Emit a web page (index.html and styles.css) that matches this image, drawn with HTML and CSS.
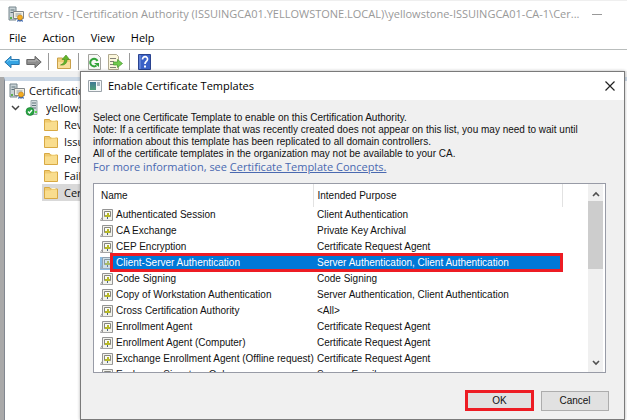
FILE: index.html
```html
<!DOCTYPE html>
<html lang="en">
<head>
<meta charset="utf-8">
<title>certsrv</title>
<link rel="stylesheet" href="styles.css">
</head>
<body>
<svg class="defs" aria-hidden="true">
  <symbol id="ca" viewBox="0 0 16 16">
    <path d="M1 1h7v13H1z" fill="#c9d3d6" stroke="#76868d"/>
    <path d="M2.500 4h4M2.500 6.500h4" stroke="#5d7079"/>
    <path d="M2 11h2v2H2z" fill="#5ab04c"/>
    <path d="M5.500 5.500h10v7h-10z" fill="#f4f1e4" stroke="#81868a"/>
    <path d="M7.500 8h6M7.500 10h3" stroke="#8f9aa0"/>
    <path d="m10 12-1 4 2-1 1 1v-4zM12 12v4l1-1 2 1-1-4z" fill="#3d68b0"/>
    <circle cx="12" cy="11.500" r="2.500" fill="#f3ad22" stroke="#c47d10" stroke-width=".6"/>
  </symbol>
  <symbol id="folder" viewBox="0 0 14 13">
    <path d="M.5 1.500h5l1 1.500h7v9.500H.5z" fill="#f0cb70" stroke="#d8a943"/>
    <path d="M1 4.500h5.500l1-1H13V12H1z" fill="#f9dd8e"/>
    <path d="M7.500 2.500h4" stroke="#fff5ce"/>
  </symbol>
  <symbol id="cert" viewBox="0 0 13 13">
    <path d="M2.500.5h10v11h-10z" fill="#f2f2ec" stroke="#949494"/>
    <path d="M2 8.500.5 11.500h11" fill="none" stroke="#a5a5a5"/>
    <path d="M4.500 2.500h6v5h-6z" fill="#fbfbf3" stroke="#85857f"/>
    <path d="M7 4h2v4H7zM5 6h5v2H5z" fill="#b7b928"/>
    <path d="M7.500 8v2" stroke="#4a627e"/>
  </symbol>
</svg>

<main class="window">
  <header class="titlebar">
    <svg class="i16"><use href="#ca"/></svg>
    <h1>certsrv - [Certification Authority (ISSUINGCA01.YELLOWSTONE.LOCAL)\yellowstone-ISSUINGCA01-CA-1\Cer...</h1>
    <button class="minimize" type="button" aria-label="Minimize"></button>
  </header>
  <nav class="menubar">
    <button type="button">File</button>
    <button type="button">Action</button>
    <button type="button">View</button>
    <button type="button">Help</button>
  </nav>
  <div class="toolbar">
    <button type="button" aria-label="Back"><svg class="i16" viewBox="0 0 16 16"><path d="M.8 8 7 2.300v3.200h8.200v5H7v3.200z" fill="#35a4e3" stroke="#2876ae"/><path d="M3 7.500 6 5v1.500h8" fill="none" stroke="#83d0f5"/></svg></button>
    <button class="forward" type="button" aria-label="Forward"><svg class="i16" viewBox="0 0 16 16"><path d="M15.200 8 9 2.300v3.200H.8v5H9v3.200z" fill="#8d8d8d" stroke="#686868"/><path d="M2 7h8V5l2.500 2.500" fill="none" stroke="#b5b5b5"/></svg></button>
    <span class="sep"></span>
    <button class="up" type="button" aria-label="Up one level"><svg class="i16" viewBox="0 0 16 16"><path d="M1.500 4h5l1 1.500h7v9h-13z" fill="#f2cf78" stroke="#c9a04a"/><path d="M2 8h12v6H2z" fill="#f9df9b"/><path d="M4.500 11c3-1 4-3 4-5.500H6L10 1l3.500 4.500H11c0 4-2.500 6-6.500 5.500z" fill="#65b52b" stroke="#43891c" stroke-width=".6"/></svg></button>
    <span class="sep"></span>
    <button class="refresh" type="button" aria-label="Refresh"><svg class="i16" viewBox="0 0 16 16"><path d="M2.500.5h9l3 3v12h-12z" fill="#f7f8f5" stroke="#a3a39e"/><path d="M11.500 7A3.800 3.800 0 1 0 10.500 11.500" fill="none" stroke="#31a338" stroke-width="2"/><path d="M8 9h5v4z" fill="#31a338"/></svg></button>
    <button class="export" type="button" aria-label="Export list"><svg class="i16" viewBox="0 0 16 16"><path d="M1.500.5h8l2 2v13h-10z" fill="#fcf7dc" stroke="#b0a98f"/><path d="M3 4.500h6M3 7.500h4M3 10.500h4M3 13.500h6" stroke="#817f78"/><path d="M6.500 8h4V5.500l5 4-5 4V11h-4z" fill="#72cb4e" stroke="#44952e" stroke-width=".7"/></svg></button>
    <span class="sep"></span>
    <button class="help" type="button" aria-label="Help"><svg class="i16" viewBox="0 0 16 16"><path d="M2.500.5h12v15h-12z" fill="#3b61c7" stroke="#2a438f"/><path d="M4 1v14" stroke="#829de1"/><path d="M6.500 5.500c0-4 5.500-3.500 5 0C11.200 7.500 9 7.500 9 10" fill="none" stroke="#fff" stroke-width="1.700"/><path d="M8 11.500h2v2H8z" fill="#fff"/></svg></button>
  </div>

  <section class="workspace">
    <ul class="tree">
      <li class="root"><svg class="i16"><use href="#ca"/></svg><span>Certification Authority</span></li>
      <li class="server">
        <svg class="chevron" viewBox="0 0 9 6"><path d="m1 1 3.500 3.500L8 1" fill="none" stroke="#444" stroke-width="1.500"/></svg>
        <svg class="i16" viewBox="0 0 16 16"><path d="M6 .5h6v14H6z" fill="#d4dddf" stroke="#97a6ab"/><path d="M7 3h4M7 5.500h4M7 8h4" stroke="#60747c"/><path d="M10 11h2v2h-2z" fill="#5ccf4f"/><circle cx="5" cy="11.500" r="4" fill="#29a343" stroke="#147a2b" stroke-width=".6"/><path d="m3 11.500 1.500 1.500L7 10" fill="none" stroke="#fff" stroke-width="1.300"/></svg>
        <span>yellowstone</span>
      </li>
      <li class="leaf"><svg class="folder"><use href="#folder"/></svg><span>Revoked</span></li>
      <li class="leaf"><svg class="folder"><use href="#folder"/></svg><span>Issued</span></li>
      <li class="leaf"><svg class="folder"><use href="#folder"/></svg><span>Pending</span></li>
      <li class="leaf"><svg class="folder"><use href="#folder"/></svg><span>Failed</span></li>
      <li class="leaf current"><svg class="folder"><use href="#folder"/></svg><span>Certificate</span></li>
    </ul>
  </section>

  <section class="dialog" role="dialog" aria-labelledby="dialog-title">
    <header class="dialog-title">
      <svg class="app" viewBox="0 0 14 12"><defs><linearGradient id="g" x2="0" y2="1"><stop stop-color="#3f7894"/><stop offset="1" stop-color="#4fa077"/></linearGradient></defs><path d="M.5.5h13v11H.5z" fill="#f5f7f8" stroke="#9ba3a9"/><path d="M2 2h6v8H2z" fill="url(#g)"/><path d="M9 2h3v4H9z" fill="#a5b4bd"/></svg>
      <h2 id="dialog-title">Enable Certificate Templates</h2>
      <button class="close" type="button" aria-label="Close"><svg viewBox="0 0 10 10"><path d="m.5.5 9 9m0-9-9 9" stroke="#222" stroke-width="1.200"/></svg></button>
    </header>
    <div class="dialog-body">
      <p>Select one Certificate Template to enable on this Certification Authority.<br>Note: If a certificate template that was recently created does not appear on this list, you may need to wait until<br>information about this template has been replicated to all domain controllers.<br>All of the certificate templates in the organization may not be available to your CA.</p>
      <p class="more">For more information, see <a href="#concepts">Certificate Template Concepts.</a></p>
      <div class="listbox">
        <div class="list-view">
          <table>
            <colgroup><col class="c-icon"><col class="c-name"><col></colgroup>
            <thead><tr><th colspan="2">Name</th><th>Intended Purpose</th></tr></thead>
            <tbody>
              <tr><td><svg class="cert"><use href="#cert"/></svg></td><td>Authenticated Session</td><td>Client Authentication</td></tr>
              <tr><td><svg class="cert"><use href="#cert"/></svg></td><td>CA Exchange</td><td>Private Key Archival</td></tr>
              <tr><td><svg class="cert"><use href="#cert"/></svg></td><td>CEP Encryption</td><td>Certificate Request Agent</td></tr>
              <tr class="selected"><td><svg class="cert"><use href="#cert"/></svg></td><td>Client-Server Authentication</td><td>Server Authentication, Client Authentication</td></tr>
              <tr><td><svg class="cert"><use href="#cert"/></svg></td><td>Code Signing</td><td>Code Signing</td></tr>
              <tr><td><svg class="cert"><use href="#cert"/></svg></td><td>Copy of Workstation Authentication</td><td>Server Authentication, Client Authentication</td></tr>
              <tr><td><svg class="cert"><use href="#cert"/></svg></td><td>Cross Certification Authority</td><td>&lt;All&gt;</td></tr>
              <tr><td><svg class="cert"><use href="#cert"/></svg></td><td>Enrollment Agent</td><td>Certificate Request Agent</td></tr>
              <tr><td><svg class="cert"><use href="#cert"/></svg></td><td>Enrollment Agent (Computer)</td><td>Certificate Request Agent</td></tr>
              <tr><td><svg class="cert"><use href="#cert"/></svg></td><td>Exchange Enrollment Agent (Offline request)</td><td>Certificate Request Agent</td></tr>
              <tr><td><svg class="cert"><use href="#cert"/></svg></td><td>Exchange Signature Only</td><td>Secure Email</td></tr>
            </tbody>
          </table>
        </div>
        <div class="scrollbar">
          <svg viewBox="0 0 8 6"><path d="m1 5 3-3 3 3" fill="none" stroke="#505050" stroke-width="1.600"/></svg>
          <span class="thumb"></span>
          <svg viewBox="0 0 8 6"><path d="m1 1 3 3 3-3" fill="none" stroke="#505050" stroke-width="1.600"/></svg>
        </div>
      </div>
      <footer class="actions">
        <button class="ok" type="button">OK</button>
        <button type="button">Cancel</button>
      </footer>
    </div>
  </section>
</main>
</body>
</html>
```
FILE: styles.css
```css
* { box-sizing: border-box; }

body {
  margin: 0;
  overflow: hidden;
  color: #111;
  background: #fff;
  font: 11px/16px "Open Sans", "Noto Sans", sans-serif;
}

button {
  padding: 0;
  border: 0;
  background: none;
  color: inherit;
  font: inherit;
}

h1, h2, p, ul { margin: 0; padding: 0; }
h1, h2 { font-size: 11px; font-weight: 400; white-space: nowrap; }
svg { display: block; flex: none; }

.defs { position: absolute; width: 0; height: 0; }
.i16 { width: 16px; height: 16px; }

.window {
  position: relative;
  display: flex;
  flex-direction: column;
  min-height: 100vh;
  border-top: 1px solid #efefef;
}

.titlebar {
  display: flex;
  align-items: center;
  height: 26px;
  padding: 0 25px 0 8px;
  gap: 4px;
  color: #999;
}

.titlebar h1 { flex: 1; }
.minimize { width: 10px; height: 1px; background: #999; }

.menubar {
  display: flex;
  align-items: center;
  gap: 16px;
  height: 23px;
  padding: 0 9px;
  border-bottom: 1px solid #b9bdbc;
  color: #000;
}

.toolbar {
  display: flex;
  align-items: center;
  height: 21px;
  padding: 2px 0 0 4px;
}

.toolbar .forward { margin-left: 6px; }
.toolbar .up { margin-left: 7px; }
.toolbar .refresh { margin-left: 7px; }
.toolbar .export { margin-left: 5px; }
.toolbar .help { margin-left: 6px; }
.sep { width: 1px; height: 17px; margin-left: 6px; background: #9a9a9a; }

.workspace {
  flex: 1;
  display: flex;
  border-top: 6px solid #f0f0f0;
  background: #a9a9a9;
  padding-left: 4px;
}

.tree {
  flex: 1;
  padding-top: 1px;
  border-top: 4px solid #cbd8e6;
  border-left: 1px solid #828790;
  background: #fff;
  list-style: none;
}

.tree li {
  display: flex;
  align-items: center;
  width: 120px;
  height: 17px;
  gap: 4px;
  white-space: nowrap;
}

.tree .root { padding-left: 4px; }
.tree .server { padding-left: 6px; gap: 5px; }
.tree .leaf { width: 80px; margin-left: 37px; padding-left: 2px; gap: 6px; }
.tree .current { background: #d9d9d9; }
.tree span { overflow: hidden; }
.chevron { width: 9px; height: 6px; }
.folder { width: 14px; height: 13px; }

.dialog {
  position: absolute;
  top: 70px;
  right: 2px;
  left: 80px;
  border: 1px solid #7a7a7a;
  background: #f0f0f0;
  box-shadow: 0 0 3px rgba(0, 0, 0, .3);
}

.dialog-title {
  display: flex;
  align-items: center;
  height: 28px;
  padding: 0 9px 0 7px;
  gap: 6px;
  background: #fff;
  color: #000;
}

.dialog-title h2 { flex: 1; }
.app { width: 14px; height: 12px; }
.close svg { width: 10px; height: 10px; }

.dialog-body {
  padding: 12px 18px 8px 12px;
  font: 10px/12px "Liberation Sans", Arial, sans-serif;
}

.dialog-body p { white-space: nowrap; }

.dialog-body .more {
  margin-bottom: 9px;
  color: #4a69b0;
  font: 11px/14px "Open Sans", "Noto Sans", sans-serif;
}

.more a { color: inherit; }

.listbox {
  display: flex;
  height: 190px;
  border: 1px solid #989ba6;
  background: #fff;
}

.list-view { flex: 1; overflow: hidden; padding-left: 3px; }

table {
  width: calc(100% - 25px);
  border-collapse: collapse;
  table-layout: fixed;
}

.c-icon { width: 16px; }
.c-name { width: 200px; }

th, td {
  height: 16px;
  padding: 0 0 0 3px;
  text-align: left;
  font-weight: 400;
  white-space: nowrap;
}

th {
  height: 23px;
  padding: 1px 4px 0;
  border-right: 1px solid #e2e2e2;
}

td:first-child { padding: 0; }
td:last-child { padding-left: 4px; }
.cert { width: 13px; height: 13px; margin-left: 3px; }

.selected { position: relative; color: #fff; }
.selected td + td { background: #0078d7; }
.selected .cert { background: #8bbce2; }
.selected .cert use { opacity: .65; }

.selected td:last-child::after {
  content: "";
  position: absolute;
  inset: -2px 0 -1px 13px;
  border: 3px solid #ed1c24;
}

.scrollbar {
  display: flex;
  flex-direction: column;
  align-items: center;
  width: 17px;
  padding: 7px 2px 6px 0;
  background: linear-gradient(to right, #f0f0f0 15px, #fff 15px);
}

.scrollbar svg { width: 8px; height: 6px; }
.thumb { width: 15px; height: 68px; margin: 4px 0 auto; background: #cdcdcd; }

.actions {
  display: flex;
  justify-content: flex-end;
  align-items: center;
  gap: 7px;
  padding-top: 17px;
  margin-right: -3px;
}

.actions button {
  width: 68px;
  height: 20px;
  border: 1px solid #adadad;
  background: #e1e1e1;
}

.actions .ok { height: 21px; border: 3px solid #ed1c24; width: 69px; }
```
